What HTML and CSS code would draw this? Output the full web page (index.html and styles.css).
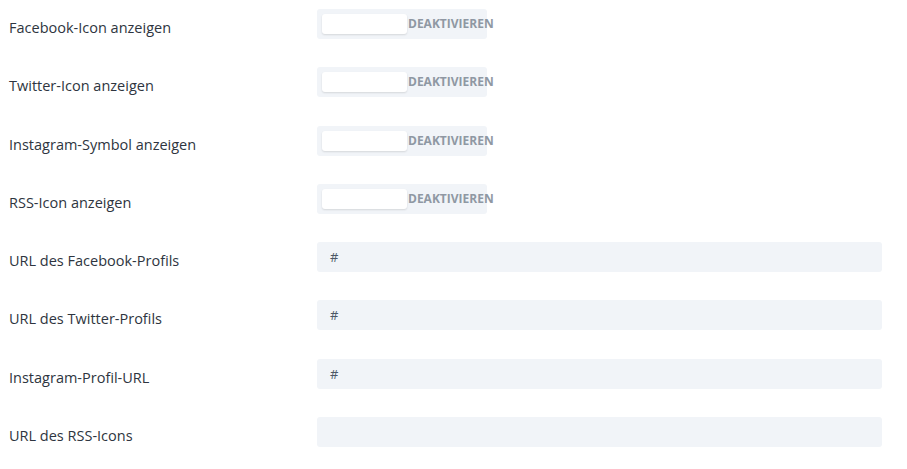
FILE: index.html
```html
<!DOCTYPE html>
<html lang="de">
<head>
<meta charset="utf-8">
<link rel="stylesheet" href="styles.css">
</head>
<body>
<div class="settings">
  <div class="row">
    <div class="label">Facebook-Icon anzeigen</div>
    <div class="toggle"><span class="knob"></span><span class="state">DEAKTIVIEREN</span></div>
  </div>
  <div class="row">
    <div class="label">Twitter-Icon anzeigen</div>
    <div class="toggle"><span class="knob"></span><span class="state">DEAKTIVIEREN</span></div>
  </div>
  <div class="row">
    <div class="label">Instagram-Symbol anzeigen</div>
    <div class="toggle"><span class="knob"></span><span class="state">DEAKTIVIEREN</span></div>
  </div>
  <div class="row">
    <div class="label">RSS-Icon anzeigen</div>
    <div class="toggle"><span class="knob"></span><span class="state">DEAKTIVIEREN</span></div>
  </div>
  <div class="row">
    <div class="label">URL des Facebook-Profils</div>
    <div class="input">#</div>
  </div>
  <div class="row">
    <div class="label">URL des Twitter-Profils</div>
    <div class="input">#</div>
  </div>
  <div class="row">
    <div class="label">Instagram-Profil-URL</div>
    <div class="input">#</div>
  </div>
  <div class="row">
    <div class="label">URL des RSS-Icons</div>
    <div class="input"></div>
  </div>
</div>
</body>
</html>
```
FILE: styles.css
```css
html, body {
  margin: 0;
  background: #ffffff;
}
body {
  font-family: "Open Sans", "Noto Sans", sans-serif;
  color: #32373c;
}
.settings {
  display: flex;
  flex-direction: column;
  gap: 28.3px;
  padding: 9px 0 0 9px;
}
.row {
  display: grid;
  grid-template-columns: 308px 565px;
  align-items: start;
}
.label {
  font-size: 14.5px;
  font-weight: 500;
  line-height: 20px;
  margin-top: 9px;
  color: #2e3540;
}
.toggle {
  width: 170px;
  height: 30px;
  box-sizing: border-box;
  padding: 5px;
  background: #f1f4f8;
  border-radius: 3px;
  display: flex;
  align-items: flex-start;
}
.knob {
  flex: none;
  width: 85px;
  height: 20px;
  background: #ffffff;
  border-radius: 3px;
  box-shadow: 0 1px 2px rgba(0, 0, 0, 0.12);
}
.state {
  flex: none;
  margin-left: 1px;
  font-size: 12px;
  font-weight: 700;
  line-height: 19px;
  color: #8f98a3;
  white-space: nowrap;
}
.input {
  height: 30px;
  box-sizing: border-box;
  padding: 0 13px;
  background: #f1f4f8;
  border-radius: 3px;
  font-size: 13px;
  line-height: 30px;
  color: #4c5866;
}
```
